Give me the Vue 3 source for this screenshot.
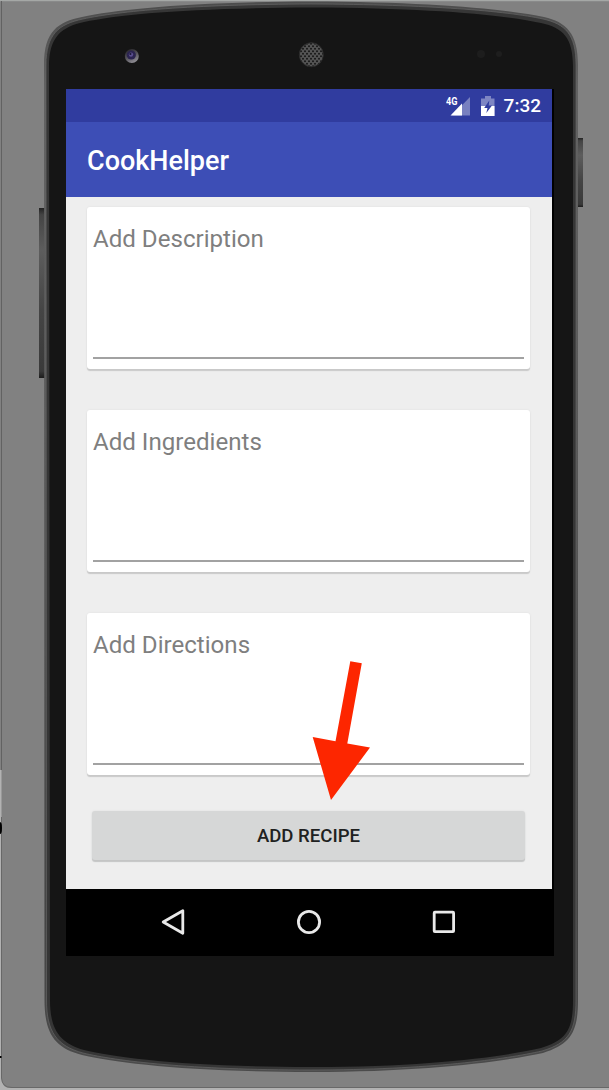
<script setup>
const fields = ['Add Description', 'Add Ingredients', 'Add Directions']
</script>

<template>
  <main class="stage">
    <svg class="phone" viewBox="0 0 609 1090" aria-hidden="true">
      <defs>
        <linearGradient id="rim" x1="0" y1="0" x2="0" y2="1">
          <stop offset="0" stop-color="#4c4c4c" />
          <stop offset=".08" stop-color="#626262" />
          <stop offset=".5" stop-color="#555" />
          <stop offset=".85" stop-color="#444" />
          <stop offset="1" stop-color="#4b4b4b" />
        </linearGradient>
        <linearGradient id="key" x1="0" y1="0" x2="0" y2="1">
          <stop offset="0" stop-color="#222" />
          <stop offset=".04" stop-color="#444" />
          <stop offset=".25" stop-color="#5d5d5d" />
          <stop offset=".6" stop-color="#454545" />
          <stop offset=".96" stop-color="#3a3a3a" />
          <stop offset="1" stop-color="#1c1c1c" />
        </linearGradient>
        <linearGradient id="lens" x1="0.2" y1="0" x2="0.7" y2="1">
          <stop offset="0" stop-color="#262528" />
          <stop offset=".5" stop-color="#55535a" />
          <stop offset="1" stop-color="#96949b" />
        </linearGradient>
        <pattern id="mesh" width="4" height="5" patternUnits="userSpaceOnUse">
          <rect width="4" height="5" fill="#555" />
          <circle cx="1" cy="1.2" r="1" fill="#171717" />
          <circle cx="3" cy="3.7" r="1" fill="#171717" />
        </pattern>
      </defs>
      <!-- window edges -->
      <path d="M0 0H609V1.2H0Z" fill="#a5a8a6" />
      <path d="M1.5 1V770" stroke="#626262" />
      <path d="M0 770H1.5V1078Q1.5 1088 11 1088H609V1090H0Z" fill="#b2b2b2" />
      <path d="M1.5 817V1078Q2 1087.5 12 1087.5H609" fill="none" stroke="#686868" />
      <path d="M0 822Q2 822 2 828Q2 834 0 834Z" fill="#000" />
      <path d="M0 1056H1.5V1058H0Z" fill="#000" />
      <!-- side keys -->
      <rect x="39" y="208" width="7" height="170" fill="url(#key)" />
      <rect x="576" y="138" width="7" height="69" fill="url(#key)" />
      <!-- body -->
      <path d="M44 65C44 31 58 22 82 17C119 9 190 2 311 1.5C430 2 507 9 544 17C566 22 578 33 578 65V1000C578 1032 571 1044 543 1053C506 1061 430 1072 311 1072C190 1072 116 1063 82 1055C55 1048 44.5 1034 44.5 1000Z" fill="url(#rim)" />
      <path d="M46 65C46 34 59 24 83 19C120 11 190 4.5 311 4C430 4.5 506 11 543 19C565 24 576 34 576 65V1000C576 1031 569 1043 542 1051C506 1059 430 1070 311 1070C190 1070 116 1061 83 1053C57 1046 46.5 1032 46.5 1000Z" fill="#363636" stroke="#656565" stroke-width=".7" />
      <path d="M49 67C49 36 62 27 84 22C121 14 190 8 311 7.5C430 8 506 15 541 23C563 28 573 37 573 67V1000C573 1029 567 1040 541 1048C506 1056 430 1067 311 1067C190 1067 117 1058 84 1050C60 1043 50 1030 50 1000Z" fill="#151515" />
      <!-- camera, speaker, sensors -->
      <circle cx="131.8" cy="56" r="7" fill="url(#lens)" />
      <circle cx="131.3" cy="55" r="4.6" fill="#2b2450" />
      <circle cx="131" cy="54.6" r="2.2" fill="#5b4f90" />
      <circle cx="130.4" cy="54" r="1.1" fill="#1b1733" />
      <circle cx="311.3" cy="54.7" r="12" fill="url(#mesh)" stroke="#2c2c2c" />
      <circle cx="481" cy="54" r="4" fill="#1d1d1d" />
      <circle cx="499" cy="54" r="3" fill="#1e1e1e" />
    </svg>

    <section class="screen">
      <header>
        <div class="status">
          <svg class="signal" viewBox="0 0 26 22">
            <path d="M6 20.5L24 2V20.5Z" fill="#fff" opacity=".35" />
            <path d="M4.5 20.5L16 8.5V20.5Z" fill="#fff" />
            <text x="0" y="9.5" textLength="11.5" lengthAdjust="spacingAndGlyphs">4G</text>
          </svg>
          <svg class="battery" viewBox="0 0 14 20">
            <path d="M0 2.5H4V0H10V2.5H13.5V20H0Z" fill="#fff" opacity=".38" />
            <path d="M0 10H13.5V20H0Z" fill="#fff" />
            <path d="M8.3 4.5L3.2 12H6.5L5.3 17L11 9.5H7.7Z" fill="#303c9f" />
          </svg>
          <span class="time">7:32</span>
        </div>
        <h1>CookHelper</h1>
      </header>
      <form @submit.prevent>
        <label v-for="field in fields" :key="field" class="card">
          <span>{{ field }}</span>
        </label>
        <button type="submit">ADD RECIPE</button>
      </form>
      <nav>
        <svg viewBox="0 0 30 30"><path d="M4.2 15L23.8 3.7V26.3Z" /></svg>
        <svg viewBox="0 0 30 30"><circle cx="15" cy="15" r="10.6" /></svg>
        <svg viewBox="0 0 30 30"><rect x="5.2" y="5.2" width="19.4" height="19.4" rx=".7" /></svg>
      </nav>
    </section>

    <svg class="arrow" viewBox="0 0 60 142" aria-hidden="true">
      <path d="M38.3 1.3L49.8 3.3L35.3 83.5L58 87.5L19 140L.7 77L23.5 81.3Z" fill="#fd2600" />
    </svg>
  </main>
</template>

<style>
body {
  margin: 0;
}
</style>

<style scoped>
.stage {
  position: relative;
  width: 609px;
  height: 1090px;
  box-sizing: border-box;
  padding: 89px 55px 0 66px;
  overflow: hidden;
  background: #818181;
  font-family: Roboto, sans-serif;
}
.phone {
  position: absolute;
  inset: 0;
  width: 609px;
  height: 1090px;
}
.screen {
  position: relative;
  width: 488px;
  height: 867px;
  display: flex;
  flex-direction: column;
  background: #000;
}
header {
  width: 486px;
  height: 108px;
  background: #3d4eb6;
}
.status {
  height: 33px;
  display: flex;
  align-items: center;
  justify-content: flex-end;
  box-sizing: border-box;
  padding-right: 11px;
  background: #303c9f;
  color: #fff;
}
.signal {
  width: 26px;
  height: 22px;
  margin-right: 9px;
}
.signal text {
  font: 700 11.5px Roboto, sans-serif;
  fill: #fff;
}
.battery {
  width: 14px;
  height: 20px;
  margin: 0 9px 0 0;
}
.time {
  font-size: 19px;
  font-weight: 500;
  line-height: 33px;
}
h1 {
  margin: 0;
  padding: 1px 0 0 21px;
  font-size: 27px;
  font-weight: 500;
  line-height: 77px;
  color: #fff;
}
form {
  width: 486px;
  height: 692px;
  box-sizing: border-box;
  padding: 10px 22px 0 21px;
  display: flex;
  flex-direction: column;
  gap: 41px;
  background: #eee;
}
.card {
  height: 162px;
  flex: none;
  box-sizing: border-box;
  padding: 17px 6px 10px;
  display: flex;
  border-radius: 3px;
  background: #fff;
  box-shadow: 0 2px 1px #c9c9c9, 0 0 2px #ddd;
}
.card span {
  flex: 1;
  border-bottom: 2px solid #a2a2a2;
  font-size: 24.1px;
  line-height: 30px;
  color: #7f7f7f;
}
button {
  height: 49px;
  margin: -5px 5px 0;
  padding: 2px 0 0;
  border: 0;
  border-radius: 3px;
  background: #d6d7d7;
  box-shadow: 0 2px 1px #c4c5c5, 0 0 2px #ddd;
  font: 500 18.6px/47px Roboto, sans-serif;
  color: #202121;
}
nav {
  flex: 1;
  display: flex;
  align-items: center;
  justify-content: space-between;
  padding: 0 95px 2px 93px;
}
nav svg {
  width: 30px;
  height: 30px;
  fill: none;
  stroke: #e9e9e9;
  stroke-width: 2.8;
  stroke-linejoin: round;
}
.arrow {
  position: absolute;
  left: 312px;
  top: 660px;
  width: 60px;
  height: 142px;
}
</style>
